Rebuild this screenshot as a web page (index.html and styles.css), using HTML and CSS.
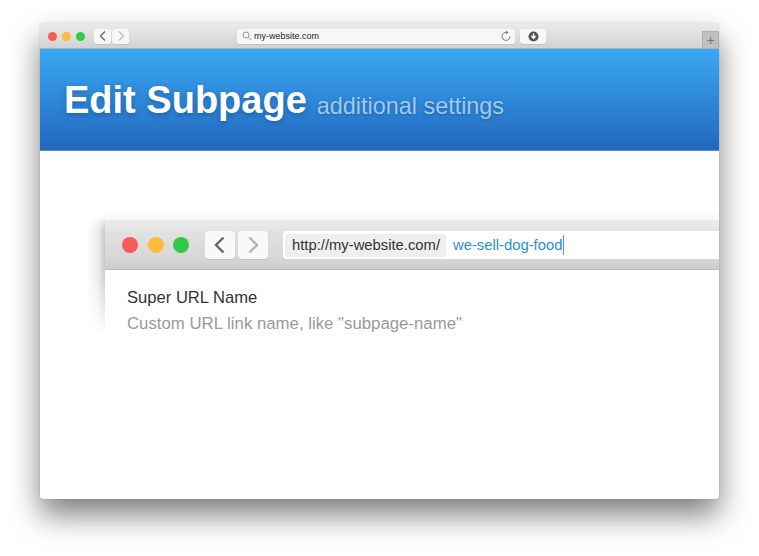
FILE: index.html
```html
<!DOCTYPE html>
<html lang="en">
<head>
<meta charset="utf-8">
<title>Edit Subpage</title>
<link rel="stylesheet" href="styles.css">
</head>
<body>
<div class="window">
  <div class="titlebar">
    <div class="lights">
      <span class="light red"></span><span class="light yellow"></span><span class="light green"></span>
    </div>
    <div class="navs">
      <span class="nav"><svg viewBox="0 0 16 16" width="16" height="16"><path d="M10 3.500 5.500 8l4.500 4.500" fill="none" stroke="#666" stroke-width="1.300"/></svg></span>
      <span class="nav"><svg viewBox="0 0 16 16" width="16" height="16"><path d="M6 3.500 10.500 8 6 12.500" fill="none" stroke="#bbb" stroke-width="1.300"/></svg></span>
    </div>
    <div class="address">
      <svg class="search" viewBox="0 0 10 10" width="10" height="10"><circle cx="4" cy="4" r="3" fill="none" stroke="#999" stroke-width="1"/><path d="M6.200 6.200 9 9" stroke="#999" stroke-width="1"/></svg>
      <span class="domain">my-website.com</span>
      <svg class="reload" viewBox="0 0 12 12" width="12" height="12"><path d="M6.600 2.400A4 4 0 1 0 10 6.400" fill="none" stroke="#777" stroke-width="1"/><path d="M6 .4 8.600 2.400 6 4.200z" fill="#777"/></svg>
    </div>
    <span class="download"><svg viewBox="0 0 12 12" width="11" height="11"><circle cx="6" cy="6" r="5.500" fill="#555"/><path d="M6 2.600v4.200M3.800 5.400 6 8l2.200-2.600" fill="none" stroke="#fff" stroke-width="1.500"/></svg></span>
    <span class="newtab">+</span>
  </div>
  <header class="hero">
    <h1 class="title">Edit Subpage</h1>
    <span class="subtitle">additional settings</span>
  </header>
  <main class="content">
    <div class="inner">
      <div class="inner-shadow"></div>
      <div class="toolbar">
        <div class="lights big">
          <span class="light red"></span><span class="light yellow"></span><span class="light green"></span>
        </div>
        <div class="navs big">
          <span class="nav"><svg viewBox="0 0 30 30" width="30" height="30"><path d="M18.500 7.500 11 15l7.500 7.500" fill="none" stroke="#666" stroke-width="2.400"/></svg></span>
          <span class="nav"><svg viewBox="0 0 30 30" width="30" height="30"><path d="M11.500 7.500 19 15l-7.500 7.500" fill="none" stroke="#b4b4b4" stroke-width="2.400"/></svg></span>
        </div>
        <div class="url">
          <span class="prefix">http://my-website.com/</span>
          <span class="slug">we-sell-dog-food</span>
        </div>
      </div>
      <div class="form">
        <div class="field-name">Super URL Name</div>
        <div class="field-hint">Custom URL link name, like "subpage-name"</div>
      </div>
    </div>
  </main>
</div>
</body>
</html>
```

FILE: styles.css
```css
* { box-sizing: border-box; }
html, body { margin: 0; height: 100%; background: #fff; overflow: hidden; }
body { padding: 23px 40px 0; font-family: "Liberation Sans", Arial, sans-serif; }

.window {
  width: 679px;
  height: 476px;
  display: flex;
  flex-direction: column;
  background: #fff;
  border-radius: 3px;
  box-shadow: 0 0 1px rgba(0,0,0,.35), 0 16px 30px rgba(0,0,0,.5);
  overflow: hidden;
}

.titlebar {
  position: relative;
  height: 26px;
  flex: none;
  display: flex;
  align-items: center;
  padding: 1px 0 0 8px;
  background: linear-gradient(#ecebec, #d3d2d3);
  border-bottom: 1px solid #aeb3b8;
}
.lights { display: flex; gap: 5px; }
.light { width: 9px; height: 9px; border-radius: 50%; }
.red { background: #fc5b57; }
.yellow { background: #fdbb40; }
.green { background: #34c84a; }

.navs { display: flex; gap: 1px; margin-left: 9px; }
.nav {
  width: 17px;
  height: 15px;
  background: #f7f7f7;
  border-radius: 3px;
  display: flex;
  align-items: center;
  justify-content: center;
  box-shadow: 0 1px 1px rgba(0,0,0,.1);
}
.address {
  margin-left: 108px;
  width: 278px;
  height: 15px;
  background: #f7f7f7;
  border-radius: 3px;
  display: flex;
  align-items: center;
  padding: 0 3px 0 5px;
  box-shadow: 0 1px 1px rgba(0,0,0,.1);
}
.domain { margin-left: 2px; font-size: 9px; color: #222; flex: 1; }
.download {
  margin-left: 5px;
  width: 26px;
  height: 15px;
  background: #f7f7f7;
  border-radius: 3px;
  display: flex;
  align-items: center;
  justify-content: center;
  box-shadow: 0 1px 1px rgba(0,0,0,.1);
}
.newtab {
  position: absolute;
  right: 0;
  bottom: 0;
  width: 17px;
  height: 17px;
  background: #bfbfc0;
  border: 1px solid #b0b0b0;
  border-bottom: 0;
  color: #777;
  font-size: 14px;
  line-height: 16px;
  text-align: center;
}

.hero {
  height: 102px;
  flex: none;
  display: flex;
  align-items: baseline;
  padding: 27px 0 0 24px;
  background: linear-gradient(#3aa8f2, #2268bf);
  border-bottom: 1px solid #4a8ed6;
}
.title {
  margin: 0;
  font-size: 38px;
  font-weight: 700;
  line-height: 48px;
  color: #fff;
  text-shadow: 0 2px 5px rgba(0,40,100,.35);
}
.subtitle {
  margin-left: 10px;
  font-size: 23.400px;
  color: #a0c9ec;
  text-shadow: 0 1px 3px rgba(0,40,100,.35);
  transform: translateY(1px);
}

.content { flex: 1; padding: 69px 0 0 65px; }
.inner { position: relative; }
.inner-shadow {
  position: absolute;
  left: -18px;
  top: -4px;
  width: 18px;
  height: 118px;
  background: linear-gradient(to left, rgba(0,0,0,.2), rgba(0,0,0,.07) 40%, transparent);
  -webkit-mask-image: linear-gradient(transparent, #000 12%, #000 50%, transparent);
  mask-image: linear-gradient(transparent, #000 12%, #000 50%, transparent);
}
.toolbar {
  position: relative;
  height: 50px;
  display: flex;
  align-items: center;
  padding: 1px 0 0 17px;
  background: linear-gradient(#ececec, #e2e2e2 24%, #d6d6d6 80%, #cdcdcd);
  border-bottom: 1px solid #bdbdbd;
  box-shadow: 0 -3px 8px rgba(0,0,0,.05);
}
.lights.big { gap: 9.500px; }
.lights.big .light { width: 16px; height: 16px; }
.navs.big { gap: 3px; margin-left: 16px; }
.navs.big .nav { width: 30px; height: 28px; border-radius: 4px; background: #f9f9f9; }
.url {
  margin-left: 15px;
  flex: 1;
  height: 28px;
  display: flex;
  align-items: center;
  background: #fff;
  border-radius: 4px 0 0 4px;
  padding-left: 2px;
}
.prefix {
  height: 23px;
  line-height: 23px;
  padding: 0 6px 0 7px;
  background: #efefef;
  border-radius: 3px;
  font-size: 14.800px;
  color: #333;
}
.slug {
  margin-left: 7px;
  padding-right: 1px;
  font-size: 14.800px;
  line-height: 20px;
  color: #2a8fcf;
  border-right: 1px solid #3f9fdc;
}
.form { padding: 18px 0 0 22px; }
.field-name { font-size: 16.600px; line-height: 19px; color: #333; }
.field-hint { margin-top: 7px; font-size: 16.800px; line-height: 20px; color: #9a9a9a; }
```
